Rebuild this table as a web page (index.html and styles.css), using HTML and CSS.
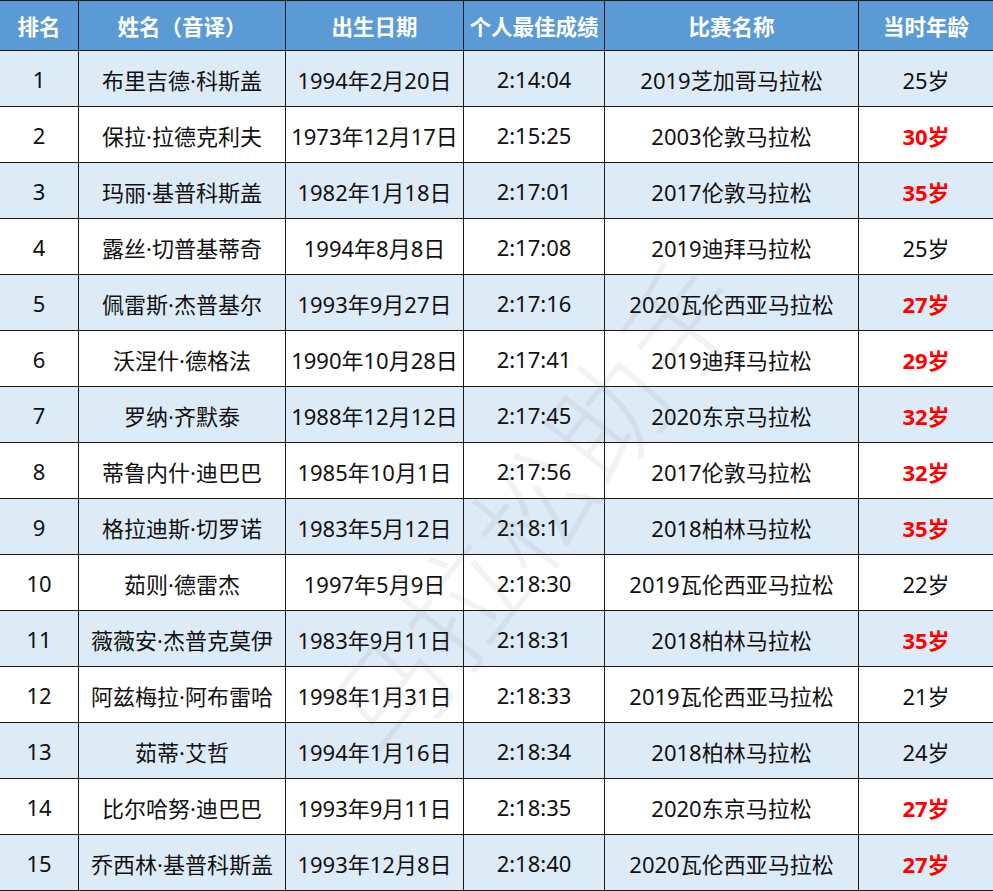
FILE: index.html
```html
<!DOCTYPE html>
<html lang="zh">
<head>
<meta charset="utf-8">
<title>女子马拉松成绩排名</title>
<link rel="stylesheet" href="styles.css">
</head>
<body>
<div class="sheet">
<table class="rank">
  <colgroup>
    <col class="c1"><col class="c2"><col class="c3"><col class="c4"><col class="c5"><col class="c6">
  </colgroup>
  <thead>
    <tr><th>排名</th><th>姓名（音译）</th><th>出生日期</th><th>个人最佳成绩</th><th>比赛名称</th><th>当时年龄</th></tr>
  </thead>
  <tbody>
    <tr class="alt"><td>1</td><td>布里吉德·科斯盖</td><td>1994年2月20日</td><td>2:14:04</td><td>2019芝加哥马拉松</td><td>25岁</td></tr>
    <tr><td>2</td><td>保拉·拉德克利夫</td><td>1973年12月17日</td><td>2:15:25</td><td>2003伦敦马拉松</td><td class="red">30岁</td></tr>
    <tr class="alt"><td>3</td><td>玛丽·基普科斯盖</td><td>1982年1月18日</td><td>2:17:01</td><td>2017伦敦马拉松</td><td class="red">35岁</td></tr>
    <tr><td>4</td><td>露丝·切普基蒂奇</td><td>1994年8月8日</td><td>2:17:08</td><td>2019迪拜马拉松</td><td>25岁</td></tr>
    <tr class="alt"><td>5</td><td>佩雷斯·杰普基尔</td><td>1993年9月27日</td><td>2:17:16</td><td>2020瓦伦西亚马拉松</td><td class="red">27岁</td></tr>
    <tr><td>6</td><td>沃涅什·德格法</td><td>1990年10月28日</td><td>2:17:41</td><td>2019迪拜马拉松</td><td class="red">29岁</td></tr>
    <tr class="alt"><td>7</td><td>罗纳·齐默泰</td><td>1988年12月12日</td><td>2:17:45</td><td>2020东京马拉松</td><td class="red">32岁</td></tr>
    <tr><td>8</td><td>蒂鲁内什·迪巴巴</td><td>1985年10月1日</td><td>2:17:56</td><td>2017伦敦马拉松</td><td class="red">32岁</td></tr>
    <tr class="alt"><td>9</td><td>格拉迪斯·切罗诺</td><td>1983年5月12日</td><td>2:18:11</td><td>2018柏林马拉松</td><td class="red">35岁</td></tr>
    <tr><td>10</td><td>茹则·德雷杰</td><td>1997年5月9日</td><td>2:18:30</td><td>2019瓦伦西亚马拉松</td><td>22岁</td></tr>
    <tr class="alt"><td>11</td><td>薇薇安·杰普克莫伊</td><td>1983年9月11日</td><td>2:18:31</td><td>2018柏林马拉松</td><td class="red">35岁</td></tr>
    <tr><td>12</td><td>阿兹梅拉·阿布雷哈</td><td>1998年1月31日</td><td>2:18:33</td><td>2019瓦伦西亚马拉松</td><td>21岁</td></tr>
    <tr class="alt"><td>13</td><td>茹蒂·艾哲</td><td>1994年1月16日</td><td>2:18:34</td><td>2018柏林马拉松</td><td>24岁</td></tr>
    <tr><td>14</td><td>比尔哈努·迪巴巴</td><td>1993年9月11日</td><td>2:18:35</td><td>2020东京马拉松</td><td class="red">27岁</td></tr>
    <tr class="alt"><td>15</td><td>乔西林·基普科斯盖</td><td>1993年12月8日</td><td>2:18:40</td><td>2020瓦伦西亚马拉松</td><td class="red">27岁</td></tr>
  </tbody>
</table>
<div class="watermark">马拉松助手</div>
</div>
</body>
</html>
```

FILE: styles.css
```css
html, body {
  margin: 0;
  padding: 0;
  background: #ffffff;
}

.sheet {
  position: relative;
  width: 993px;
  height: 891px;
  overflow: hidden;
}

.rank {
  border-collapse: collapse;
  table-layout: fixed;
  width: 994px;
  margin-left: -1px;
  font-family: "Noto Sans", "Noto Sans CJK SC", sans-serif;
  font-size: 22px;
  color: #111111;
}

.c1 { width: 79px; }
.c2 { width: 207px; }
.c3 { width: 178px; }
.c4 { width: 141px; }
.c5 { width: 254px; }
.c6 { width: 135px; }

.rank th,
.rank td {
  border: 1px solid #1a1a1a;
  text-align: center;
  vertical-align: middle;
  padding: 0;
  white-space: nowrap;
  overflow: visible;
}

.rank thead tr {
  height: 50px;
}

.rank th {
  background: #5b9bd5;
  color: #ffffff;
  font-family: "Noto Sans CJK SC", sans-serif;
  font-weight: 700;
  font-size: 21.5px;
}

.rank tbody tr {
  height: 56px;
}

.rank tbody tr.alt td {
  background: #ddebf7;
}

.rank td.red {
  color: #ff0000;
  font-weight: 700;
}

.watermark {
  position: absolute;
  left: 230px;
  top: 420px;
  width: 600px;
  text-align: center;
  font-family: "Noto Sans CJK SC", sans-serif;
  font-size: 118px;
  font-weight: 300;
  color: rgba(90, 90, 90, 0.08);
  transform: rotate(-52deg);
  pointer-events: none;
  white-space: nowrap;
}
```
